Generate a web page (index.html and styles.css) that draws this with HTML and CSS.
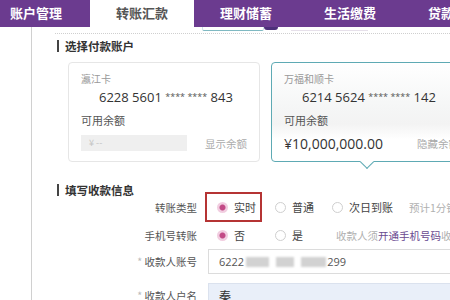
FILE: index.html
```html
<!DOCTYPE html>
<html lang="zh-CN">
  <head>
    <meta charset="UTF-8" />
    <title>转账汇款</title>
    <link rel="stylesheet" href="styles.css">
  </head>
  <body>
    <div class="tabs">
      <div class="tab first">账户管理</div>
      <div class="tab active">转账汇款</div>
      <div class="tab">理财储蓄</div>
      <div class="tab">生活缴费</div>
      <div class="tab">贷款服务</div>
    </div>

    <div class="page">
      <div class="rail"></div>
      <div class="content">
        <div class="subnav">
          <span class="sub-a"></span><span class="sub-b"></span><span class="sub-c"></span>
        </div>

        <div class="section">
          <h2 class="heading">选择付款账户</h2>
          <div class="cards">
            <div class="card">
              <div class="card-name">瀛江卡</div>
              <div class="card-no">6228 5601 <span class="mask">**** ****</span> 843</div>
              <div class="avail">可用余额</div>
              <div class="bal-row">
                <span class="bal-box">¥ --</span>
                <span class="bal-link">显示余额</span>
              </div>
            </div>
            <div class="card selected">
              <div class="card-name">万福和顺卡</div>
              <div class="card-no">6214 5624 <span class="mask">**** ****</span> 142</div>
              <div class="avail">可用余额</div>
              <div class="bal-row">
                <span class="amount">¥10,000,000.00</span>
                <span class="bal-link hide">隐藏余额</span>
              </div>
            </div>
          </div>

          <h2 class="heading second">填写收款信息</h2>
          <div class="form">
            <div class="row r1">
              <div class="label">转账类型</div>
              <div class="options">
                <label class="opt boxed"><span class="radio on"></span>实时</label>
                <label class="opt o2"><span class="radio"></span>普通</label>
                <label class="opt o3"><span class="radio"></span>次日到账</label>
                <span class="hint h1">预计1分钟内到账</span>
              </div>
            </div>
            <div class="row r2">
              <div class="label">手机号转账</div>
              <div class="options">
                <label class="opt boxed plain"><span class="radio on"></span>否</label>
                <label class="opt o2"><span class="radio"></span>是</label>
                <span class="hint h2">收款人须<em>开通手机号码</em>收款服务</span>
              </div>
            </div>
            <div class="row r3">
              <div class="label"><span class="star">*</span> 收款人账号</div>
              <div class="input">6222<span class="blur b1"></span><span class="blur b2"></span><span class="blur b3"></span>299</div>
            </div>
            <div class="row r4">
              <div class="label"><span class="star">*</span> 收款人户名</div>
              <div class="input filled">秦</div>
            </div>
          </div>
        </div>
      </div>
    </div>
  </body>
</html>
```

FILE: styles.css
```css
body {
  margin: 0;
  width: 450px;
  height: 300px;
  overflow: hidden;
  font-family: "Noto Sans CJK SC", "Noto Sans", sans-serif;
  color: #555;
  background: #fff;
}
.tabs {
  display: flex;
  height: 27px;
  background-color: #6b3b8f;
}
.tab {
  flex-shrink: 0;
  width: 104px;
  line-height: 25px;
  text-align: center;
  color: #fff;
  font-size: 13px;
  font-weight: bold;
}
.tab.first {
  width: 80px;
  padding-left: 10px;
  text-align: left;
}
.tab.active {
  background-color: #fff;
  color: #555;
}
.page {
  display: flex;
  height: 273px;
}
.rail {
  width: 31px;
  flex-shrink: 0;
  border-right: 1px solid #d0d0d0;
}
.content {
  flex: 1;
  overflow: hidden;
}
.subnav {
  display: flex;
  height: 6px;
  padding-left: 170px;
}
.subnav span {
  display: block;
  height: 3px;
}
.sub-a {
  width: 60px;
  border: 1px solid #cfe3e6;
  border-top: none;
  border-bottom: 1px solid #7fb9c2;
  border-radius: 0 0 2px 2px;
}
.sub-b {
  width: 14px;
  background-color: #4d2f7a;
  border-radius: 0 0 3px 3px;
}
.sub-c {
  width: 77px;
  margin-left: 13px;
  border-bottom: 1px solid #e6e0ea;
}
.section {
  margin-left: 23px;
  border-top: 1px dotted #cfcfcf;
}
.heading {
  margin: 6px 0 0 2px;
  padding-left: 6px;
  border-left: 2px solid #444;
  font-size: 11.5px;
  line-height: 12px;
  font-weight: bold;
  color: #333;
}
.heading.second {
  margin-top: 22px;
}
.cards {
  display: flex;
  margin: 10px 0 0 13px;
  gap: 11px;
}
.card {
  position: relative;
  flex-shrink: 0;
  box-sizing: border-box;
  width: 192px;
  height: 100px;
  padding: 9px 12px 0;
  border: 1px solid #e6e6e6;
  border-radius: 4px;
}
.card.selected {
  width: 200px;
  border-color: #5eaab4;
  background: linear-gradient(180deg, #fff 0, #f5f6f6 45%, #f3f3f3 62%, #fff 78%);
}
.card.selected::after {
  content: "";
  position: absolute;
  left: 90px;
  bottom: -6px;
  width: 9px;
  height: 9px;
  background: #fff;
  border-right: 1px solid #5eaab4;
  border-bottom: 1px solid #5eaab4;
  transform: rotate(45deg);
}
.card-name {
  font-size: 10px;
  line-height: 14px;
  color: #999;
}
.card-no {
  margin-top: 2px;
  padding-left: 18px;
  font-family: "Open Sans", "Noto Sans", sans-serif;
  font-size: 13px;
  line-height: 18px;
  color: #333;
  white-space: nowrap;
}
.mask {
  font-size: 9px;
  vertical-align: 2px;
  color: #555;
}
.avail {
  margin-top: 7px;
  font-size: 11px;
  line-height: 14px;
  color: #555;
}
.bal-row {
  display: flex;
  align-items: center;
  height: 18px;
  margin-top: 7px;
}
.bal-box {
  box-sizing: border-box;
  width: 110px;
  height: 16px;
  padding-left: 8px;
  line-height: 16px;
  font-size: 9px;
  color: #c4c4c4;
  background-color: #efefef;
}
.bal-link {
  margin-left: 18px;
  font-size: 10.5px;
  color: #aaa;
  white-space: nowrap;
}
.bal-link.hide {
  margin-left: 34px;
}
.amount {
  font-family: "Open Sans", "Noto Sans", sans-serif;
  font-size: 14px;
  color: #333;
  white-space: nowrap;
}
.form {
  margin-top: -4px;
}
.row {
  display: flex;
  align-items: center;
  white-space: nowrap;
}
.r1 {
  height: 30px;
}
.r2 {
  height: 26px;
}
.r3 {
  margin-top: 1px;
}
.r4 {
  margin-top: 9px;
}
.label {
  flex-shrink: 0;
  width: 142px;
  text-align: right;
  font-size: 10.5px;
  color: #555;
}
.star {
  color: #bbb;
}
.options {
  display: flex;
  align-items: center;
  margin-left: 8px;
  font-size: 11px;
  color: #444;
}
.opt {
  display: flex;
  align-items: center;
  gap: 6px;
}
.opt.boxed {
  box-sizing: border-box;
  height: 30px;
  padding: 0 4px 0 10px;
  border: 2px solid #b53434;
  width: 57px;
}
.opt.plain {
  border-color: transparent;
}
.opt.o2 {
  margin-left: 13px;
}
.opt.o3 {
  margin-left: 18px;
}
.radio {
  display: inline-block;
  box-sizing: border-box;
  width: 11px;
  height: 11px;
  border: 1px solid #cfcfcf;
  border-radius: 50%;
  background: #fff;
}
.radio.on {
  border: none;
  background: radial-gradient(circle, #c24a86 0, #c24a86 2.5px, #f1cde0 3.5px);
}
.hint {
  font-size: 10.5px;
  color: #b0b0b0;
}
.hint.h1 {
  margin-left: 16px;
}
.hint.h2 {
  margin-left: 33px;
}
.hint em {
  font-style: normal;
  color: #6a4a90;
}
.input {
  display: flex;
  align-items: center;
  flex: 1;
  box-sizing: border-box;
  height: 25px;
  margin-left: 11px;
  padding-left: 10px;
  border: 1px solid #dcdcdc;
  border-right: none;
  font-family: "Open Sans", "Noto Sans", sans-serif;
  font-size: 11px;
  color: #555;
}
.input.filled {
  background-color: #e9eff9;
  border-color: #dbe2ee;
  font-family: "Noto Sans CJK SC", sans-serif;
  font-size: 12px;
  color: #333;
}
.blur {
  display: inline-block;
  height: 10px;
  background-color: #d2d2d2;
  filter: blur(1px);
}
.b1 {
  width: 23px;
  margin-left: 2px;
}
.b2 {
  width: 18px;
  margin-left: 7px;
}
.b3 {
  width: 25px;
  margin: 0 1px 0 7px;
}
```
